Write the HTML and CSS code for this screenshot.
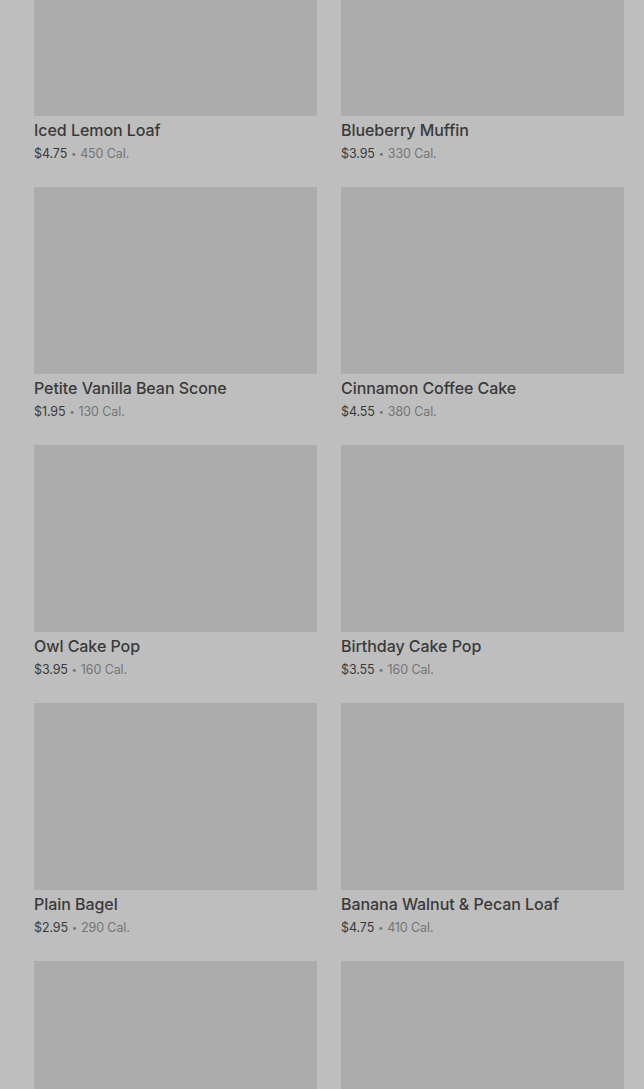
FILE: index.html
```html
<!DOCTYPE html>
<html lang="en">
<head>
    <meta charset="UTF-8">
    <meta name="viewport" content="width=device-width, initial-scale=1.0">
    <title>Bakery</title>
    <link rel="stylesheet" href="styles.css">
</head>
<body>
    <div class="grid">
        <div class="card">
            <div class="photo"></div>
            <div class="name">Iced Lemon Loaf</div>
            <div class="meta"><span class="price">$4.75</span><span class="dot">•</span>450 Cal.</div>
        </div>
        <div class="card">
            <div class="photo"></div>
            <div class="name">Blueberry Muffin</div>
            <div class="meta"><span class="price">$3.95</span><span class="dot">•</span>330 Cal.</div>
        </div>
        <div class="card">
            <div class="photo"></div>
            <div class="name">Petite Vanilla Bean Scone</div>
            <div class="meta"><span class="price">$1.95</span><span class="dot">•</span>130 Cal.</div>
        </div>
        <div class="card">
            <div class="photo"></div>
            <div class="name">Cinnamon Coffee Cake</div>
            <div class="meta"><span class="price">$4.55</span><span class="dot">•</span>380 Cal.</div>
        </div>
        <div class="card">
            <div class="photo"></div>
            <div class="name">Owl Cake Pop</div>
            <div class="meta"><span class="price">$3.95</span><span class="dot">•</span>160 Cal.</div>
        </div>
        <div class="card">
            <div class="photo"></div>
            <div class="name">Birthday Cake Pop</div>
            <div class="meta"><span class="price">$3.55</span><span class="dot">•</span>160 Cal.</div>
        </div>
        <div class="card">
            <div class="photo"></div>
            <div class="name">Plain Bagel</div>
            <div class="meta"><span class="price">$2.95</span><span class="dot">•</span>290 Cal.</div>
        </div>
        <div class="card">
            <div class="photo"></div>
            <div class="name">Banana Walnut &amp; Pecan Loaf</div>
            <div class="meta"><span class="price">$4.75</span><span class="dot">•</span>410 Cal.</div>
        </div>
        <div class="card">
            <div class="photo"></div>
        </div>
        <div class="card">
            <div class="photo"></div>
        </div>
    </div>
</body>
</html>
```

FILE: styles.css
```css
html, body {
    margin: 0;
    background-color: #bebebe;
    overflow: hidden;
}

body {
    font-family: Inter, "Noto Sans", sans-serif;
    color: #3b3b3b;
    height: 1089px;
}

.grid {
    display: grid;
    grid-template-columns: 283px 283px;
    column-gap: 24px;
    row-gap: 23px;
    padding: 0 20px 0 34px;
    margin-top: -71px;
}

.card {
    display: flex;
    flex-direction: column;
}

.photo {
    height: 187px;
    background-color: #acacac;
}

.name {
    margin-top: 4px;
    font-size: 16px;
    font-weight: 500;
    line-height: 20px;
    letter-spacing: -0.05px;
    color: #3a3a3a;
}

.meta {
    margin-top: 4px;
    font-size: 12.5px;
    line-height: 20px;
    letter-spacing: -0.1px;
    color: #747474;
}

.price {
    color: #3a3a3a;
}

.dot {
    font-size: 9px;
    margin: 0 4px;
    vertical-align: 1px;
}
```
